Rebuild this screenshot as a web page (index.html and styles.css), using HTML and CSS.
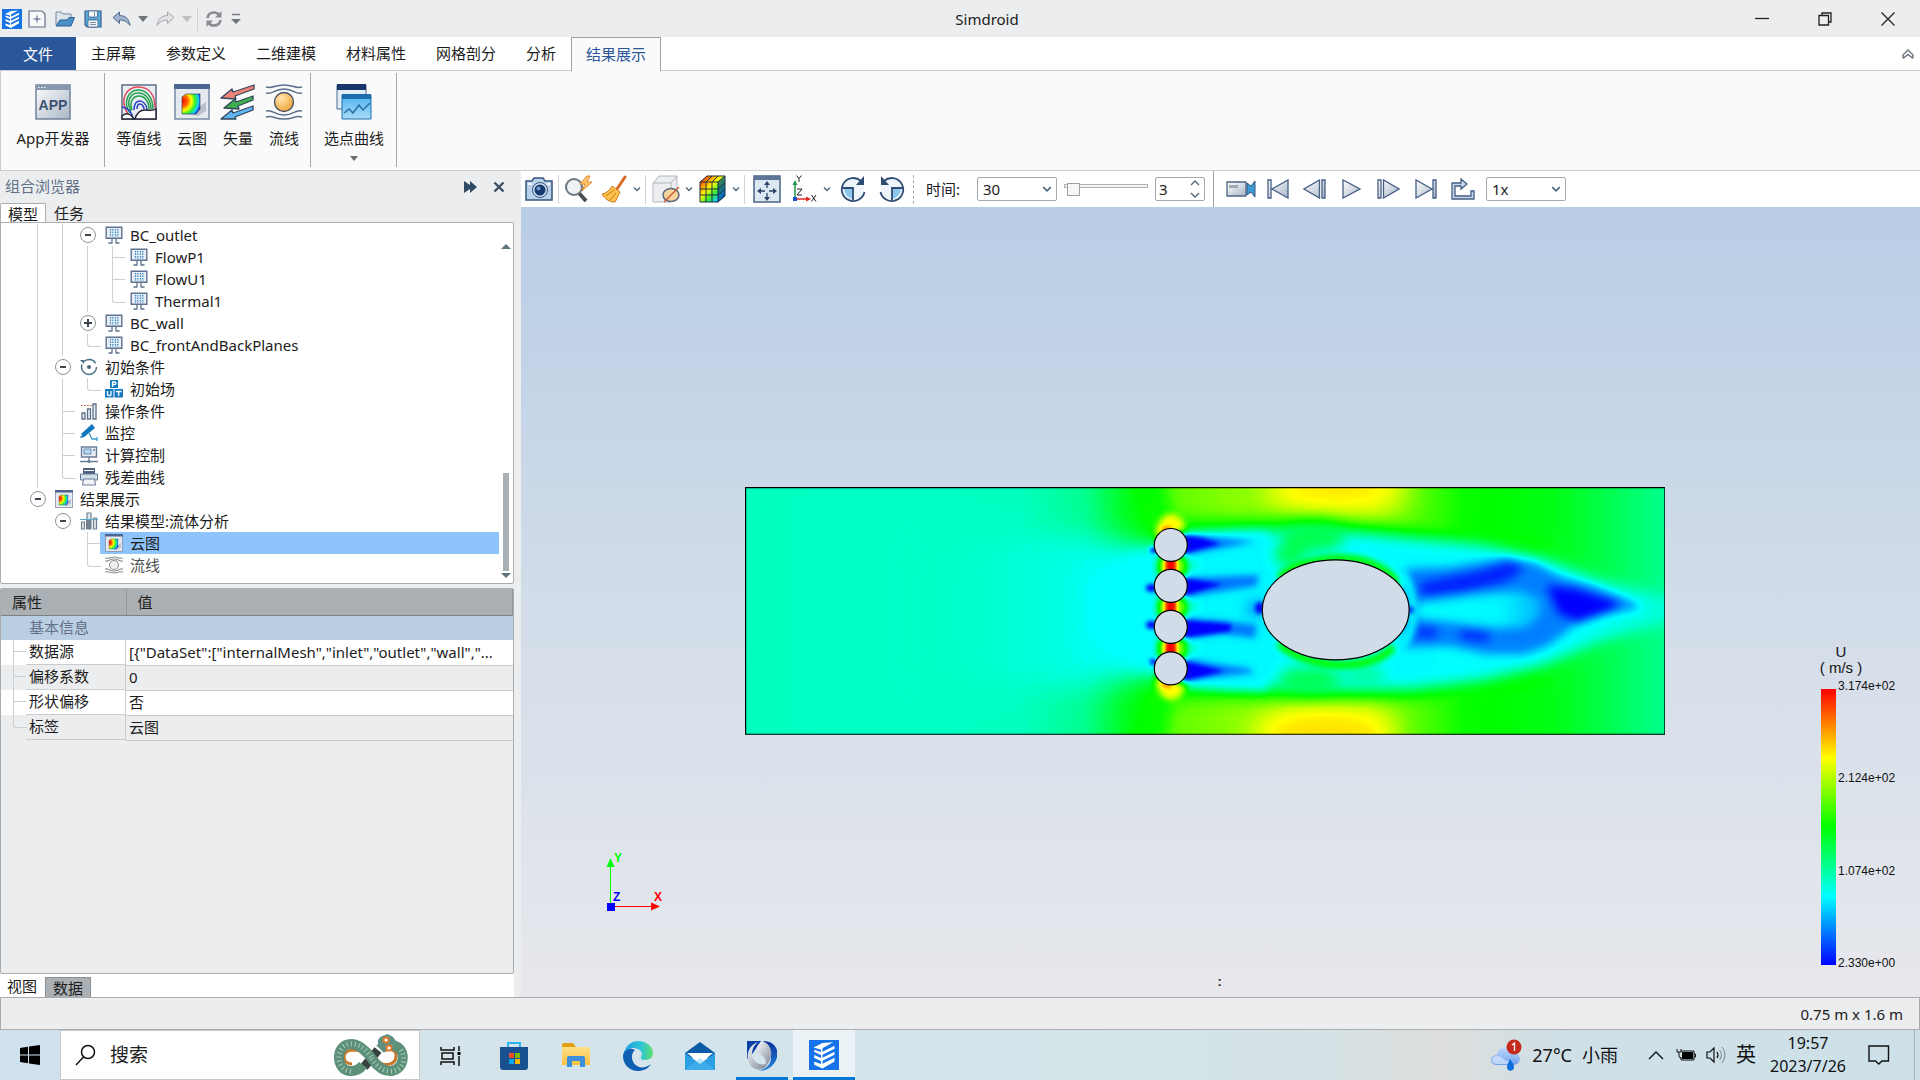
FILE: index.html
```html
<!DOCTYPE html>
<html lang="zh-CN">
<head>
<meta charset="utf-8">
<title>Simdroid</title>
<link rel="stylesheet" href="styles.css">
</head>
<body>
<svg class="defs" aria-hidden="true">
  <defs>
    <linearGradient id="steel" x1="0" y1="0" x2="1" y2="1"><stop offset="0" stop-color="#fff"/><stop offset="1" stop-color="#a9b6c6"/></linearGradient>
    <linearGradient id="sky" x1="0" y1="0" x2="0" y2="1"><stop offset="0" stop-color="#4bb4ee"/><stop offset="1" stop-color="#a9dcf7"/></linearGradient>
    <linearGradient id="heat" x1="0" y1="0" x2="1" y2="1"><stop offset="0" stop-color="#f00"/><stop offset=".25" stop-color="#f90"/><stop offset=".42" stop-color="#ff0"/><stop offset=".62" stop-color="#3e3"/><stop offset=".8" stop-color="#1cf"/><stop offset="1" stop-color="#22d"/></linearGradient>
    <radialGradient id="blob" gradientUnits="userSpaceOnUse" cx="8" cy="17" r="19"><stop offset="0" stop-color="#f00"/><stop offset=".3" stop-color="#f60"/><stop offset=".5" stop-color="#ff0"/><stop offset=".7" stop-color="#3e3"/><stop offset=".88" stop-color="#1cf"/><stop offset="1" stop-color="#22d"/></radialGradient>
    <radialGradient id="amber" cx=".35" cy=".3" r=".8"><stop offset="0" stop-color="#ffe6b0"/><stop offset="1" stop-color="#f0a030"/></radialGradient>
    <linearGradient id="folder" x1="0" y1="0" x2="0" y2="1"><stop offset="0" stop-color="#ffe08a"/><stop offset="1" stop-color="#fbc13c"/></linearGradient>
    <linearGradient id="edge1" x1="0" y1="0" x2="1" y2="0"><stop offset="0" stop-color="#1b9de2"/><stop offset=".6" stop-color="#2fc6d6"/><stop offset="1" stop-color="#5fe06a"/></linearGradient>
    <linearGradient id="cloud" x1="0" y1="0" x2="0" y2="1"><stop offset="0" stop-color="#c6dcfb"/><stop offset="1" stop-color="#6f9fee"/></linearGradient>
    <linearGradient id="silver" x1="0" y1="0" x2="1" y2="1"><stop offset="0" stop-color="#f7f8fa"/><stop offset="1" stop-color="#7d8797"/></linearGradient>
    <linearGradient id="royal" x1="0" y1="0" x2="0" y2="1"><stop offset="0" stop-color="#0b2f9c"/><stop offset="1" stop-color="#1f86dd"/></linearGradient>
    <symbol id="logo" viewBox="0 0 20 20"><path fill="#1673ea" d="M0 0h20v20H0z"/><path fill="#fff" d="M3 5l6-3 7-.5-7 4v2.300l8-4v2l-8 4v2l8-4v2l-8 4v2l8-4v2.500L9 19l-5.500-2.500v-2L8 16v-2l-4.500-2v-2L8 12v-2L3.500 8V6.500L8 8V6.500z"/></symbol>
    <symbol id="monitor" viewBox="0 0 18 18"><path fill="#e9eff5" stroke="#5f728f" stroke-width="1.400" d="M1.200 1.200h15.600v11H1.200z"/><path stroke="#2f86c8" stroke-width="1.200" stroke-dasharray="1.500 1" d="M5.500 3v8M7.800 3v8M10.500 3v8M12.800 3v8"/><path stroke="#5f728f" stroke-width="1.300" fill="none" d="M7 12.500V17M11 12.500V17M3.500 17h4M10.500 17h4"/></symbol>
    <symbol id="heatwin" viewBox="0 0 36 36"><path fill="#e4e8ef" stroke="#7a8aa4" stroke-width="1.500" d="M1 1h34v34H1z"/><path fill="#4d6690" d="M0 0h36v5H0z"/><path fill="#8d98a8" opacity=".5" d="M14 30 32 18v9l-8 5z"/><path fill="url(#blob)" stroke="#234" stroke-width=".6" d="M8 13l4-3h14v15l-4 5H8z"/></symbol>
    <symbol id="chev" viewBox="0 0 8 8"><path fill="none" stroke="#51677a" stroke-width="1.400" d="M1 2.500 4 5.500 7 2.500"/></symbol>
    <symbol id="caret" viewBox="0 0 10 6"><path fill="currentColor" d="M0 0h10L5 6z"/></symbol>
  </defs>
</svg>

<header class="titlebar">
  <div class="quick">
    <svg class="logo"><use href="#logo"/></svg>
    <button aria-label="新建"><svg width="18" height="18" viewBox="0 0 18 18"><path fill="#f7f9fb" stroke="#5d6f8a" stroke-width="1.200" d="M1 1h13l3 3v13H1z"/><path stroke="#4a5b78" d="M9 5.500v7M5.500 9h7"/></svg></button>
    <button aria-label="打开"><svg width="20" height="18" viewBox="0 0 20 18"><path fill="#dde3ea" stroke="#7586a0" d="M1 15V2h5l2 2h8v6"/><path fill="#4a90c8" stroke="#2a5f94" d="M1 16 5 10h7l2-2.500h5.500L16 16z"/></svg></button>
    <button aria-label="保存"><svg width="18" height="18" viewBox="0 0 18 18"><path fill="#5aa6d8" stroke="#3a628c" stroke-width="1.200" d="M1 1h16v16H3l-2-2z"/><path fill="#f4f6f8" stroke="#3a628c" stroke-width=".8" d="M4.500 1h9v6h-9zM4 10h10v7H4z"/><path stroke="#7b8ea8" d="M10.500 2v4M6 12.500h6M6 14.500h6"/></svg></button>
    <button aria-label="撤销"><svg width="19" height="16" viewBox="0 0 19 16"><path fill="#9fb3cc" stroke="#50688c" d="M1 6.500 7.500 1v3.500c6 0 9.500 3.500 10.500 10C15 10.500 12 9 7.500 9v3.500z"/></svg></button>
    <button class="drop" aria-label="撤销列表"><svg width="10" height="6" color="#707478"><use href="#caret"/></svg></button>
    <button aria-label="重做"><svg width="19" height="16" viewBox="0 0 19 16"><path fill="#e2e3e5" stroke="#a3a5a8" d="M18 6.500 11.500 1v3.500C5.500 4.500 2 8 1 14.500 4 10.500 7 9 11.500 9v3.500z"/></svg></button>
    <button class="drop" aria-label="重做列表"><svg width="10" height="6" color="#bcbec0"><use href="#caret"/></svg></button>
    <span class="tick"></span>
    <button aria-label="刷新"><svg width="18" height="18" viewBox="0 0 18 18"><path fill="none" stroke="#8a8c8f" stroke-width="2.600" d="M2.500 8C3 4.500 5.500 2.500 9 2.500c2.200 0 4 .9 5 2.300M15.500 10c-.5 3.500-3 5.500-6.500 5.500-2.200 0-4-.9-5-2.300"/><path fill="#8a8c8f" d="M16.500 1v6.500H10zM1.500 17v-6.500H8z"/></svg></button>
    <button class="drop" aria-label="自定义"><svg width="10" height="12" viewBox="0 0 10 12"><path stroke="#7b7d80" stroke-width="1.500" d="M1 1.500h8"/><path fill="#707478" d="M0 6h10l-5 5z"/></svg></button>
  </div>
  <h1 class="title">Simdroid</h1>
  <div class="winbtns">
    <button aria-label="最小化"><svg width="14" height="14"><path stroke="#222" stroke-width="1.300" d="M0 6.500h14"/></svg></button>
    <button aria-label="还原"><svg width="14" height="14"><path fill="none" stroke="#222" stroke-width="1.300" d="M1 3.500h9.500V13H1zM4 3V1h9v9h-2"/></svg></button>
    <button aria-label="关闭"><svg width="14" height="14"><path stroke="#222" stroke-width="1.300" d="M.5.500l13 13M13.500.500l-13 13"/></svg></button>
  </div>
</header>

<nav class="tabs">
  <button class="tab file">文件</button>
  <button class="tab">主屏幕</button>
  <button class="tab">参数定义</button>
  <button class="tab">二维建模</button>
  <button class="tab">材料属性</button>
  <button class="tab">网格剖分</button>
  <button class="tab">分析</button>
  <button class="tab active">结果展示</button>
  <button class="collapse" aria-label="折叠功能区"><svg width="12" height="10"><path fill="none" stroke="#6a7584" stroke-width="1.400" d="M1.500 9C0 7 1 5.500 3 4l3-3 3 3c2 1.500 3 3 1.500 5L6 5.500z"/></svg></button>
</nav>

<section class="ribbon">
  <div class="group">
    <button class="cmd wide"><svg width="36" height="36" viewBox="0 0 36 36"><path fill="url(#steel)" stroke="#71819a" stroke-width="1.500" d="M1 1h34v34H1z"/><path fill="#8797ad" d="M1 1h34v5H1z"/><path stroke="#fff" stroke-dasharray="1.500 1.500" d="M3 3.500h8"/><text class="apptext" x="18" y="26">APP</text></svg>App开发器</button>
  </div>
  <div class="group">
    <button class="cmd mid"><svg width="36" height="36" viewBox="0 0 36 36"><path fill="#e9edf3" stroke="#5c6c87" stroke-width="1.500" d="M1 1h34v34H1z"/><g fill="none" stroke-width="1.500"><path stroke="#e0455a" d="M7 30C-2 16 5 3 17 3s17 9 17 21"/><path stroke="#22a04a" d="M9 29C1 18 8 6 17 6s15 8 15 19M10 27C5 18 9 9 17 9s13 7 13 16M11 26c-3-8 1-14 7-14s10 6 10 13"/><path stroke="#2a3fc8" d="M13 26c0-7 3-9 6-9s7 4 7 9M16 25c0-4 1-5 3-5s4 3 4 5M1 23c7 1 10 5 11 12"/></g><path fill="#fff" stroke="#223" stroke-width="1.500" d="M14 35c2-7 6-9 10-9s8 1 11-1v10zM1 32c5-4 9-2 12 3H1z"/></svg>等值线</button>
    <button class="cmd"><svg width="36" height="36"><use href="#heatwin"/></svg>云图</button>
    <button class="cmd"><svg width="36" height="36" viewBox="0 0 36 36"><g stroke="#34465e" stroke-width="1.300" stroke-linejoin="round"><path fill="#ef8377" d="M1 14 12 5l1 3L34 1v4L15 12l1 3z"/><path fill="#3fae4e" d="M4 24l11-9 1 3 17-6v4l-15 6 1 3z"/><path fill="#5fb4f2" d="M1 35l11-9 1 3 20-7v4l-18 7 1 2z"/></g></svg>矢量</button>
    <button class="cmd"><svg width="36" height="36" viewBox="0 0 36 36"><g fill="none" stroke="#5b6e8c" stroke-width="1.500"><path d="M0 3c7 2 8-2 18-2s11 4 18 2M0 9c7 2 8-4 18-4s11 6 18 4M0 27c7-2 8 4 18 4s11-6 18-4M0 33c7-2 8 2 18 2s11-4 18-2"/></g><circle cx="18" cy="18" r="9.500" fill="url(#amber)" stroke="#4c5668" stroke-width="1.400"/></svg>流线</button>
  </div>
  <div class="group">
    <button class="cmd plot"><svg width="36" height="36" viewBox="0 0 36 36"><path fill="#e2eef8" stroke="#4c6d92" d="M1 1h29v24H1z"/><path fill="#17356b" d="M1 0h29v6H1z"/><path fill="url(#sky)" stroke="#1d6fae" d="M6 11h29v24H6z"/><path fill="#1c6cae" d="M6 10h29v5H6z"/><path fill="none" stroke="#2b6fa6" stroke-width="1.500" d="M8 29l5-4 4 4 6-8 4 5 7-7"/></svg>选点曲线<svg class="more" width="8" height="5"><use href="#caret"/></svg></button>
  </div>
</section>

<main class="work">
  <aside class="side">
    <div class="sidehead"><span>组合浏览器</span>
      <button aria-label="自动隐藏"><svg width="14" height="12"><path fill="#2f4a63" d="M1 0l6 4V0l7 6-7 6V8l-6 4z"/></svg></button>
      <button aria-label="关闭面板"><svg width="12" height="12"><path stroke="#3b4f63" stroke-width="2.400" d="M1.500 1.500l9 9M10.500 1.500l-9 9"/></svg></button>
    </div>
    <div class="sidetabs"><button class="on">模型</button><button>任务</button></div>
    <div class="tree">
      <ul class="rows">
        <li><i class="v"></i><i class="v"></i><i class="x"></i><svg class="ic"><use href="#monitor"/></svg>BC_outlet</li>
        <li><i class="v"></i><i class="v"></i><i class="v"></i><i class="t"></i><svg class="ic"><use href="#monitor"/></svg>FlowP1</li>
        <li><i class="v"></i><i class="v"></i><i class="v"></i><i class="t"></i><svg class="ic"><use href="#monitor"/></svg>FlowU1</li>
        <li><i class="v"></i><i class="v"></i><i class="v"></i><i class="l"></i><svg class="ic"><use href="#monitor"/></svg>Thermal1</li>
        <li><i class="v"></i><i class="v"></i><i class="x p"></i><svg class="ic"><use href="#monitor"/></svg>BC_wall</li>
        <li><i class="v"></i><i class="v"></i><i class="l"></i><svg class="ic"><use href="#monitor"/></svg>BC_frontAndBackPlanes</li>
        <li><i class="v"></i><i class="x"></i><svg class="ic" viewBox="0 0 18 18"><circle cx="9" cy="9" r="7.500" fill="none" stroke="#3f6f80" stroke-width="1.400" stroke-dasharray="26 3 14 4"/><circle cx="9" cy="9" r="2" fill="#4a6a7c"/><path fill="#3f6f80" d="M0 2h4v4z"/></svg>初始条件</li>
        <li><i class="v"></i><i class="v"></i><i class="l"></i><svg class="ic" viewBox="0 0 18 18"><path fill="#1679c0" d="M5 0h8v8H5zM0 9h8.500v8.500H0zM9.500 9H18v8.500H9.500z"/><path fill="none" stroke="#fff" stroke-width="1.300" d="M7.500 7V2h2c2 0 2 2.500 0 2.500h-2M2.500 11v3.500c0 1.500 3.500 1.500 3.500 0V11M11 11.500h5.500M13.700 11.500V16"/></svg>初始场</li>
        <li><i class="v"></i><i class="t"></i><svg class="ic" viewBox="0 0 18 18"><path fill="#e6edf4" stroke="#5f7088" stroke-width="1.300" d="M2 11h3v6H2zM7.500 7h3v10h-3zM13 2h3v15h-3z"/><path stroke="#c8785a" stroke-dasharray="2 1" d="M1 3.500h11"/></svg>操作条件</li>
        <li><i class="v"></i><i class="t"></i><svg class="ic" viewBox="0 0 18 18"><path fill="#1176bd" d="M1 10 12 0l3 4L4 13zM0 13l4-3 2 2-5 2z"/><path fill="none" stroke="#3f9ad2" stroke-width="1.300" d="M9 9l3 6h5M17 13v4"/></svg>监控</li>
        <li><i class="v"></i><i class="t"></i><svg class="ic" viewBox="0 0 18 18"><path fill="#e8edf3" stroke="#6b7c96" stroke-width="1.400" d="M1.500 1h15v10h-15z"/><path fill="#b8d6ee" stroke="#5f8fb4" d="M4 3h7v5H4z"/><path stroke="#6b7c96" stroke-width="1.300" d="M0 15.500h18M9 11v4M13 4h2"/><circle cx="9" cy="15.500" r="1.600" fill="#6b7c96"/></svg>计算控制</li>
        <li><i class="v"></i><i class="l"></i><svg class="ic" viewBox="0 0 18 18"><path fill="#4e617e" d="M3 0h12v6H3z"/><path fill="#d5dfe8" stroke="#667a98" d="M.5 6h17v6H.5z"/><path fill="#f1f4f7" stroke="#667a98" d="M3.500 11h11l1 6h-13z"/><path stroke="#fff" d="M4 2.500h10"/></svg>残差曲线</li>
        <li><i class="x"></i><svg class="ic"><use href="#heatwin"/></svg>结果展示</li>
        <li><i></i><i class="x"></i><svg class="ic" viewBox="0 0 18 18"><path fill="#dfe6ec" stroke="#72818f" stroke-width="1.200" d="M1.500 10h3v7h-3zM7 1h4v16H7zM13.500 6h3v11h-3z"/><path fill="#71808c" d="M6 8h5v9H6z"/><path stroke="#58a8cc" d="M0 7.500h18"/></svg>结果模型:流体分析</li>
        <li><i></i><i></i><i class="t"></i><span class="sel"><svg class="ic"><use href="#heatwin"/></svg>云图</span></li>
        <li class="dim"><i></i><i></i><i class="l"></i><svg class="ic" viewBox="0 0 18 18"><g fill="none" stroke="#8f9294" stroke-width="1.100"><path d="M0 2c4 1 5-1 9-1s5 2 9 1M0 5c4 1 4-2 9-2s5 3 9 2M0 13c4-1 4 2 9 2s5-3 9-2M0 16c4-1 5 1 9 1s5-2 9-1"/><circle cx="9" cy="9" r="4.500" fill="#eee"/></g></svg>流线</li>
      </ul>
      <div class="scroll"><svg width="10" height="6"><path fill="#5f757e" d="M0 6h10L5 1z"/></svg><span></span><svg width="10" height="6"><path fill="#5f757e" d="M0 0h10L5 5z"/></svg></div>
    </div>
    <div class="props">
      <table>
        <thead><tr><th>属性</th><th>值</th></tr></thead>
        <tbody>
          <tr class="cat"><td colspan="2">基本信息</td></tr>
          <tr><td><i class="t"></i><span>数据源</span></td><td>[{"DataSet":["internalMesh","inlet","outlet","wall","...</td></tr>
          <tr><td><i class="t"></i><span>偏移系数</span></td><td>0</td></tr>
          <tr><td><i class="t"></i><span>形状偏移</span></td><td>否</td></tr>
          <tr><td><i class="l"></i><span>标签</span></td><td>云图</td></tr>
        </tbody>
      </table>
    </div>
    <div class="foottabs"><button>视图</button><button class="on">数据</button></div>
  </aside>

  <section class="view">
    <div class="toolbar">
      <button class="tool" aria-label="截图"><svg width="28" height="24" viewBox="0 0 28 24"><path fill="#b9d2ea" stroke="#35547e" stroke-width="1.500" d="M1 4h6l2-3h9l2 3h7v19H1z"/><path fill="#fff" d="M3 6h4v2H3zM22 6h3v2h-3z"/><circle cx="15" cy="13" r="7.500" fill="#cfe0f0" stroke="#35547e"/><circle cx="15" cy="13" r="5.500" fill="#173a70"/><circle cx="13.500" cy="11.500" r="2" fill="#6f9ccc"/></svg></button>
      <span class="bar"></span>
      <button class="tool" aria-label="缩放"><svg width="30" height="28" viewBox="0 0 30 28"><path stroke="#4b4f55" stroke-width="4" d="M15 18l7 8"/><circle cx="10" cy="12" r="8" fill="#eef2f5" stroke="#6f767e" stroke-width="2"/><path fill="#ffc46b" stroke="#e08a2c" d="M23 1 16 9h5l-3 7 10-9h-5l3-6z"/></svg></button>
      <button class="tool" aria-label="清除"><svg width="26" height="28" viewBox="0 0 26 28"><path stroke="#d96b2a" stroke-width="3" stroke-linecap="round" d="M24 2l-8 12"/><path fill="#ffc24a" stroke="#c87a22" d="M1 19c5-1 8-4 10-8l8 6c-2 4-3 7-5 10C8 27 4 24 1 19z"/><path stroke="#c87a22" fill="none" d="M5 21l8-6M9 25l6-7"/></svg></button>
      <button class="drop" aria-label="清除选项"><svg width="8" height="8"><use href="#chev"/></svg></button>
      <span class="bar"></span>
      <button class="tool" aria-label="切面"><svg width="28" height="28" viewBox="0 0 28 28"><path fill="#eceef1" stroke="#b1b6bd" d="M1 8 7 1h18v19l-6 7H1z"/><path fill="none" stroke="#b1b6bd" d="M1 8h18v19M19 8l6-7"/><ellipse cx="19" cy="20" rx="8" ry="6.500" fill="#f4d49a" stroke="#5c6b80" stroke-width="1.500"/><path stroke="#d0502e" stroke-width="1.300" d="M12 27 27 12"/></svg></button>
      <button class="drop" aria-label="切面选项"><svg width="8" height="8"><use href="#chev"/></svg></button>
      <button class="tool" aria-label="网格云图"><svg width="27" height="28" viewBox="0 0 27 28"><path fill="url(#heat)" d="M1 7 8 1h18v20l-7 6H1z"/><path fill="#0a3f8c" opacity=".65" d="M19 7l7-6v20l-7 6z"/><path fill="none" stroke="#1d2f3f" d="M1 7 8 1h18v20l-7 6H1zM1 7h18v20M19 7l7-6M7 7v20M13 7v20M1 14h18l7-6M1 20h18l7-6M7 7l6-6M13 7l6-6"/></svg></button>
      <button class="drop" aria-label="网格云图选项"><svg width="8" height="8"><use href="#chev"/></svg></button>
      <span class="bar"></span>
      <button class="tool big" aria-label="适应窗口"><svg width="28" height="28" viewBox="0 0 28 28"><path fill="#dce9f3" stroke="#4a6285" stroke-width="1.500" d="M1 1h26v26H1z"/><path fill="#5d7698" d="M1 1h26v4H1z"/><path stroke="#2c4468" stroke-width="1.300" d="M14 9v4M14 18v5M7 16h5M16 16h5"/><path fill="#2c4468" d="M14 6l3 4h-6zM14 26l3-4h-6zM4 16l4-3v6zM24 16l-4-3v6z"/></svg></button>
      <button class="tool" aria-label="视角"><svg width="26" height="28" viewBox="0 0 26 28"><path stroke="#23944a" stroke-width="1.500" d="M4 24V9"/><path fill="#23944a" d="M1.500 10h5L4 5z"/><path stroke="#e02828" stroke-width="1.500" d="M4 24h12"/><path fill="#e02828" d="M15 21.500v5l5-2.500z"/><path fill="#1e50c8" d="M2 22h4v4H2z"/><path fill="none" stroke="#222" d="M5.500.500l2.500 3 2.500-3M8 3.500V7M6 14h5l-5 6h5M20.500 20l4.500 6.500M25 20l-4.500 6.500"/></svg></button>
      <button class="drop" aria-label="视角选项"><svg width="8" height="8"><use href="#chev"/></svg></button>
      <button class="tool big" aria-label="顺时针旋转"><svg width="26" height="28" viewBox="0 0 26 28"><circle cx="13" cy="14" r="11" fill="#eef5fa"/><path fill="#8cc8ee" d="M13 13v11a11 11 0 0 1-9-11z"/><path fill="none" stroke="#2e4a72" stroke-width="1.800" d="M21 6A11.500 11.500 0 1 0 24.500 17M2 13h11v12"/><path fill="#2e4a72" d="M24 1v9h-8z"/></svg></button>
      <button class="tool big" aria-label="逆时针旋转"><svg width="26" height="28" viewBox="0 0 26 28"><circle cx="13" cy="14" r="11" fill="#eef5fa"/><path fill="#8cc8ee" d="M13 13v11a11 11 0 0 0 9-11z"/><path fill="none" stroke="#2e4a72" stroke-width="1.800" d="M5 6A11.500 11.500 0 1 1 1.500 17M24 13H13v12"/><path fill="#2e4a72" d="M2 1v9h8z"/></svg></button>
      <span class="bar dots"></span>
      <label class="tlabel" for="time">时间:</label>
      <span class="select"><select id="time"><option>30</option></select><svg width="10" height="10"><use href="#chev"/></svg></span>
      <input class="slider" type="range" min="0" max="30" value="1" aria-label="时间帧">
      <span class="spin"><input type="number" value="3" aria-label="步数"><svg width="10" height="20"><path fill="none" stroke="#51677a" stroke-width="1.400" d="M1 6l4-4 4 4M1 14l4 4 4-4"/></svg></span>
      <span class="bar solid"></span>
      <button class="play" aria-label="录制"><svg width="30" height="18" viewBox="0 0 30 18"><path fill="url(#steel)" stroke="#4f6485" stroke-width="1.300" d="M1 2h19v14H1z"/><path fill="#a3a9b1" d="M3 5h9v3H3z"/><path fill="#3d9ad0" stroke="#35547e" d="M21 3l4 3 4-5v16l-4-5-4 3z"/></svg></button>
      <button class="play" aria-label="第一帧"><svg width="22" height="20" viewBox="0 0 22 20"><path fill="url(#steel)" stroke="#465e84" stroke-width="1.300" d="M1 1h3v18H1zM21 1v18L5 10z"/></svg></button>
      <button class="play" aria-label="上一帧"><svg width="23" height="20" viewBox="0 0 23 20"><path fill="url(#steel)" stroke="#465e84" stroke-width="1.300" d="M19 1h3v18h-3zM16.500 1v18L1 10z"/></svg></button>
      <button class="play" aria-label="播放"><svg width="19" height="20" viewBox="0 0 19 20"><path fill="url(#steel)" stroke="#465e84" stroke-width="1.300" d="M1 1v18l17-9z"/></svg></button>
      <button class="play" aria-label="下一帧"><svg width="23" height="20" viewBox="0 0 23 20"><path fill="url(#steel)" stroke="#465e84" stroke-width="1.300" d="M1 1h3v18H1zM6.500 1v18L22 10z"/></svg></button>
      <button class="play" aria-label="最后一帧"><svg width="22" height="20" viewBox="0 0 22 20"><path fill="url(#steel)" stroke="#465e84" stroke-width="1.300" d="M18 1h3v18h-3zM1 1v18l16-9z"/></svg></button>
      <button class="play" aria-label="循环"><svg width="24" height="22" viewBox="0 0 24 22"><path fill="#c6d6e6" stroke="#465e84" stroke-width="1.300" d="M1 21V5h9V1l6 5-6 5V8H4v10h16v-5h3v8z"/></svg></button>
      <span class="select speed"><select aria-label="播放速度"><option>1x</option></select><svg width="10" height="10"><use href="#chev"/></svg></span>
    </div>
    <div class="scene">
      <svg class="field" viewBox="0 0 921 248">
        <defs>
          <!-- grey level = velocity magnitude; the table maps it onto the blue-cyan-green-yellow-red scale -->
          <filter id="rainbow" x="0" y="0" width="1" height="1" color-interpolation-filters="sRGB">
            <feComponentTransfer>
              <feFuncR type="table" tableValues="0 0 0 1 1"/>
              <feFuncG type="table" tableValues="0 1 1 1 0"/>
              <feFuncB type="table" tableValues="1 1 0 0 0"/>
            </feComponentTransfer>
          </filter>
          <filter id="b2" x="-1" y="-1" width="3" height="3" color-interpolation-filters="sRGB"><feGaussianBlur stdDeviation="2"/></filter>
          <filter id="b3" x="-1" y="-1" width="3" height="3" color-interpolation-filters="sRGB"><feGaussianBlur stdDeviation="3"/></filter>
          <filter id="b5" x="-1" y="-1" width="3" height="3" color-interpolation-filters="sRGB"><feGaussianBlur stdDeviation="5"/></filter>
          <filter id="b8" x="-1" y="-1" width="3" height="3" color-interpolation-filters="sRGB"><feGaussianBlur stdDeviation="7"/></filter>
          <filter id="b16" x="-1" y="-1" width="3" height="3" color-interpolation-filters="sRGB"><feGaussianBlur stdDeviation="14"/></filter>
          <linearGradient id="stream" gradientUnits="userSpaceOnUse" x1="0" y1="0" x2="921" y2="0">
            <stop offset="0" stop-color="#505050"/><stop offset=".15" stop-color="#4e4e4e"/><stop offset=".3" stop-color="#505050"/><stop offset=".37" stop-color="#5c5c5c"/><stop offset=".41" stop-color="#767676"/><stop offset=".44" stop-color="#848484"/><stop offset=".47" stop-color="#989898"/><stop offset=".53" stop-color="#a2a2a2"/><stop offset=".68" stop-color="#a8a8a8"/><stop offset=".73" stop-color="#969696"/><stop offset=".78" stop-color="#828282"/><stop offset=".88" stop-color="#7a7a7a"/><stop offset="1" stop-color="#5c5c5c"/>
          </linearGradient>
          <linearGradient id="fan" gradientUnits="userSpaceOnUse" x1="200" y1="0" x2="400" y2="0"><stop offset="0" stop-color="#4e4e4e"/><stop offset=".45" stop-color="#494949"/><stop offset="1" stop-color="#3f3f3f"/></linearGradient>
          <linearGradient id="wake" gradientUnits="userSpaceOnUse" x1="430" y1="0" x2="921" y2="0"><stop offset="0" stop-color="#3e3e3e"/><stop offset=".8" stop-color="#404040"/><stop offset="1" stop-color="#4a4a4a"/></linearGradient>
          <linearGradient id="core" gradientUnits="userSpaceOnUse" x1="670" y1="0" x2="810" y2="0"><stop offset="0" stop-color="#404040"/><stop offset=".6" stop-color="#3e3e3e"/><stop offset="1" stop-color="#282828"/></linearGradient>
          <clipPath id="domain"><path d="M0 0h921v248H0z"/></clipPath>
        </defs>
        <g filter="url(#rainbow)"><g clip-path="url(#domain)">
          <path fill="url(#stream)" d="M0 0h921v248H0z"/>
          <g filter="url(#b16)">
            <ellipse cx="592" cy="2" rx="72" ry="24" fill="#c6c6c6"/><ellipse cx="580" cy="248" rx="72" ry="34" fill="#c6c6c6"/>
            <path fill="url(#fan)" d="M180 60l130-12 60 6 70 14v112l-70 14-60 6-130-12z"/>
          </g>
          <path filter="url(#b8)" fill="#808080" d="M380-10l34 0 16 50-8 14zM380 258l34 0 16-50-8-14z"/>
          <path filter="url(#b8)" fill="#404040" d="M340 96l50-32 50-6v130l-50-6-50-32z"/>
          <g filter="url(#b8)">
            <path fill="#828282" d="M430 30h150l80 8 80 8 60 10 0 20-370-10zM430 214h150l80 0 80-6 60-14v-24l-370 20z"/>
            <path fill="url(#wake)" d="M436 48l60-4h60l60 2 50 5 70 6 60 13 60 24 80 18v20l-80 22-60 26-60 14-70 8-60 0-60-2-60 0-60-4z"/>
          </g>
          <path filter="url(#b5)" fill="#3e3e3e" d="M442 47l80-2v158l-80-4z"/>
          <g filter="url(#b8)" fill="#6c6c6c"><ellipse cx="568" cy="51" rx="32" ry="14"/><ellipse cx="545" cy="68" rx="16" ry="12"/><ellipse cx="565" cy="192" rx="32" ry="12"/><ellipse cx="620" cy="188" rx="22" ry="7" fill="#606060"/></g>
          <g filter="url(#b3)" fill="none" stroke="#8c8c8c" stroke-width="7">
            <path d="M534 91C555 71 627 57 654 98M534 156c22 24 90 32 115 4"/>
          </g>
          <g filter="url(#b5)">
            <path fill="#202020" d="M662 82l44-2 54-9 30 5 26 14 34 9 36 15 12 7-38 7-28 9-28 21-24 9-38 0-36-8-46 1z"/>
            <path fill="#080808" d="M674 96l30-6 34-7 28-9 14 8-18 12-40 10-44 5z"/>
            <path fill="#000" d="M802 98l30 4 44 14-10 7-32 12-20-8z"/>
            <path fill="none" stroke="#0c0c0c" stroke-width="11" d="M672 146l20-1M716 147l28 3"/>
            <path fill="#303030" d="M500 115l18-6v24l-18-4z"/>
          </g>
          <path filter="url(#b5)" fill="url(#core)" d="M672 116l60-8 44-4 20 8 0 16-14 12-30 1-82-10z"/>
          <path filter="url(#b3)" fill="none" stroke="#424242" stroke-width="7" d="M658 88c14 18 14 54 0 70"/>
          <g filter="url(#b3)" fill="#1e1e1e">
            <path d="M440 49l26 1 44 5-44 8-26 4zM440 91l74-3-2 11-72 11zM440 132l30 1 42 5-2 13-32-4-38 4zM440 172l66 10 2 4-68 7z"/>
          </g>
          <g filter="url(#b2)" fill="#000">
            <path d="M438 48l20 3 18 6-16 4-22 6zM438 91l40 6-40 12zM438 133l48 4 0 7-48 7zM438 174l18 4 24 6-24 6-18 4z"/>
            <ellipse cx="409" cy="63" rx="4" ry="3"/><ellipse cx="407" cy="101" rx="6" ry="4"/><ellipse cx="407" cy="138" rx="6" ry="4"/><ellipse cx="409" cy="175" rx="4" ry="3"/><ellipse cx="515" cy="121" rx="5" ry="6"/><ellipse cx="666" cy="123" rx="3" ry="3"/>
          </g>
          <g filter="url(#b5)" fill="#7a7a7a"><path d="M426 74l30 4-30 7zM426 115l30 4-30 7zM426 157l30 4-30 7z"/></g>
          <g filter="url(#b3)" fill="#a0a0a0"><path d="M413 71h28v17h-28zM413 112h28v17h-28zM413 153h28v17h-28z"/></g>
          <g filter="url(#b2)" fill="#fff"><path d="M420 70h12v18h-12zM420 111h12v18h-12zM420 152h12v18h-12z"/></g>
          <g filter="url(#b3)" fill="#c0c0c0"><path d="M410 50c2-14 8-23 16-23s12 8 16 13l-14 6zM410 190c2 14 8 23 16 23s12-8 16-13l-14-6z"/></g>
          <g filter="url(#b2)" fill="#e8e8e8"><ellipse cx="422" cy="42" rx="6" ry="2"/><ellipse cx="422" cy="198" rx="6" ry="2"/></g>
        </g></g>
        <g fill="#d2dce9" stroke="#000" stroke-width="1.200">
          <circle cx="426" cy="58" r="16.500"/><circle cx="426" cy="99" r="16.500"/><circle cx="426" cy="140" r="16.500"/><circle cx="426" cy="181.500" r="16.500"/>
          <ellipse cx="591" cy="123" rx="73.500" ry="50"/>
          <path fill="none" d="M.6.600h919.800v246.800H.6z"/>
        </g>
      </svg>
      <svg class="axes" width="60" height="62" viewBox="0 0 60 62"><path stroke="#0f0" d="M5.500 54V14"/><path fill="#0f0" d="M1.500 15h8l-4-9z"/><path stroke="#f00" d="M6 54.500h42"/><path fill="#f00" d="M46 50.500v8l9-4z"/><path fill="#00f" d="M2 51h8v8H2z"/><text x="9" y="10" fill="#0f0">Y</text><text x="8" y="49" fill="#00f">Z</text><text x="49" y="49" fill="#f00">X</text></svg>
      <div class="legend">
        <div class="lt">U<br>( m/s )</div>
        <div class="lb"><span class="ramp"></span><div class="ticks"><span>3.174e+02</span><span>2.124e+02</span><span>1.074e+02</span><span>2.330e+00</span></div></div>
      </div>
      <span class="mark">:</span>
    </div>
  </section>
</main>

<div class="status">0.75 m x 1.6 m</div>

<footer class="taskbar">
  <button class="start" aria-label="开始"><svg width="20" height="20"><path d="M0 3l8-1.200V9.500H0zM9 1.600 20 0v9.500H9zM0 10.500h8v7.700L0 17zM9 10.500h11V20L9 18.400z"/></svg></button>
  <label class="search"><svg width="22" height="22"><circle cx="13" cy="8" r="6.500" fill="none" stroke="#111" stroke-width="1.500"/><path stroke="#111" stroke-width="1.500" d="M8.500 13 1 21"/></svg><input type="text" placeholder="搜索"><svg width="76" height="42" viewBox="0 0 76 42"><path fill="none" stroke="#c9772a" stroke-width="3" d="M36 23C30 16 24 16 19 16 8 17 9 30 19 30M46 28c4 4 16 4 17-5s-8-8-12-6"/><path fill="none" stroke="#35403f" stroke-width="9" d="M31 33l14-17"/><path fill="none" stroke="#5c9079" stroke-width="10" d="M40 26C30 13 24 10 18 10 2 10 2 37 18 37c5 0 9-2 12-6M47 15c3-3 6-4 10-4 18 0 16 26 0 26-8 0-13-5-18-12"/><path fill="none" stroke="#a9cdb8" stroke-width="5" stroke-dasharray="1 3" d="M38 23C30 12 24 10 18 10 2 10 2 37 18 37M68 16c6 9 2 21-11 21-8 0-13-5-19-13"/><path fill="#5f9180" d="M45 6c3-5 6-4 9-6 7 2 10 7 9 12-3 6-8 6-12 3-4-1-7-4-6-9z"/><circle cx="53" cy="6" r="3.500" fill="#e07a2e"/><circle cx="56" cy="14" r="3.500" fill="#e07a2e"/><circle cx="53" cy="6" r="1.500" fill="#fff"/><circle cx="56" cy="14" r="1.500" fill="#fff"/></svg></label>
  <button class="app first" aria-label="任务视图"><svg width="22" height="20"><path fill="none" stroke="#111" stroke-width="1.500" d="M1 1v3h13V1M1 19v-3h13v3M2 7h11v6H2zM19 0v5M19 10v10"/><path d="M17.500 6h3v3h-3z"/></svg></button>
  <button class="app" aria-label="应用商店"><svg width="30" height="30" viewBox="0 0 30 30"><path fill="none" stroke="#28b5f0" stroke-width="2" d="M9 7V2h12v5"/><path fill="#19508f" d="M1 6h28v20q0 3-3 3H4q-3 0-3-3z"/><path fill="#f25022" d="M10 12h5v5h-5z"/><path fill="#7fba00" d="M16 12h5v5h-5z"/><path fill="#00a4ef" d="M10 18h5v5h-5z"/><path fill="#ffb900" d="M16 18h5v5h-5z"/></svg></button>
  <button class="app" aria-label="文件资源管理器"><svg width="28" height="26" viewBox="0 0 28 26"><path fill="#e0a010" d="M0 2q0-2 2-2h9l3 4H0z"/><path fill="url(#folder)" d="M0 4h26q2 0 2 2v16H0z"/><path fill="#3b8ede" d="M5 24V15q0-2 2-2h14q2 0 2 2v9h-5v-6h-8v6z"/></svg></button>
  <button class="app" aria-label="Edge"><svg width="30" height="30" viewBox="0 0 30 30"><path fill="#0f5fb4" d="M0 15c1-8 7-9 12-6-5 4-4 14 4 17 4 1 8 0 12-3-3 5-8 7-13 7C6 30 0 23 0 15z"/><path fill="url(#edge1)" d="M1 12C3 4 9 0 15 0c9 0 15 6 15 12 0 5-4 7-8 7-3 0-5-1-4-3 3-5-2-9-8-9-4 0-7 2-9 5z"/></svg></button>
  <button class="app" aria-label="邮件"><svg width="30" height="28" viewBox="0 0 30 28"><path fill="#0b5aa6" d="M0 11 15 0l15 11v5H0z"/><path fill="#fff" d="M2 11h26l-13 11z"/><path fill="#2d9fe4" d="M0 11l15 11L30 11v17H0z"/><path fill="#55c0f2" d="M0 28l15-12 15 12z" opacity=".4"/></svg></button>
  <button class="app open" aria-label="仿真平台"><svg width="30" height="30" viewBox="0 0 30 30"><path fill="#0b3fa8" d="M0 0h14L6 12 0 18z"/><path fill="url(#silver)" d="M11 1C-1 5-2 20 5 26c5 4 13 4 15-3-8 2-15-3-15-10 0-5 2-9 6-12z"/><path fill="url(#royal)" d="M16 0c13 0 17 11 13 19-3 7-10 11-17 11 8-3 12-7 12-13 0-7-3-13-8-17z"/><path fill="url(#silver)" d="M10 6c3-6 9-6 12-1 4 6 3 15-4 21 2-7 0-9-4-12-3-2-5-5-4-8z"/></svg></button>
  <button class="app current" aria-label="Simdroid"><svg width="30" height="30"><use href="#logo"/></svg></button>
  <div class="tray">
    <button class="weather"><svg width="31" height="32" viewBox="0 0 31 32"><path fill="url(#cloud)" d="M6 26c-8 0-8-10 0-10C7 6 20 5 21 13c9-1 11 12 2 13z"/><path fill="#dbe8fd" opacity=".7" d="M6 25c-7 0-6-8 0-8 6 0 6 4 10 5s7 3 4 3z"/><path fill="#0f6fe0" d="M19 20c3 4 4 6 4 8 0 5-7 5-7 0 0-2 1-4 3-8z"/><circle cx="23" cy="8" r="7.500" fill="#c42b1c"/><path fill="none" stroke="#fff" stroke-width="1.300" d="M21 6l2.500-2v8"/></svg><span>27°C</span><span>小雨</span></button>
    <button class="sys" aria-label="显示隐藏的图标"><svg width="16" height="10"><path fill="none" stroke="#111" stroke-width="1.400" d="M1 9l7-7 7 7"/></svg></button>
    <button class="sys" aria-label="电源"><svg width="20" height="14"><path fill="none" stroke="#111" d="M5 3h13v9H5V9M18 6h1.500v3H18M1 1v3h4V1M3 4v4q0 2 2 2"/><path d="M6 4h11v7H6z"/></svg></button>
    <button class="sys" aria-label="音量"><svg width="20" height="18"><path fill="none" stroke="#111" stroke-width="1.200" d="M1 6h3l4-4v14l-4-4H1zM11 6q2 3 0 6"/><path fill="none" stroke="#8c979c" stroke-width="1.200" d="M13.500 4q4 5 0 10M16 1q6 8 0 16"/></svg></button>
    <button class="ime">英</button>
    <div class="clock"><time>19:57</time><time>2023/7/26</time></div>
    <button class="note" aria-label="通知"><svg width="22" height="20"><path fill="none" stroke="#111" stroke-width="1.400" d="M1 1h19.500v15H14l-3.200 3L7.500 16H1z"/></svg></button>
    <span class="peek"></span>
  </div>
</footer>
</body>
</html>
```
FILE: styles.css
```css
* { box-sizing: border-box; }
html, body { height: 100%; }
body {
  margin: 0;
  display: flex;
  flex-direction: column;
  background: #ecedef;
  color: #1c1c1c;
  font: 15px/20px "Noto Sans", "Noto Sans CJK SC", sans-serif;
  overflow: hidden;
}
button, input, select { font: inherit; color: inherit; margin: 0; }
button { background: none; border: 0; padding: 0; }
svg { display: block; flex: none; }
ul { list-style: none; margin: 0; padding: 0; }
.defs { position: absolute; width: 0; height: 0; }

/* title bar */
.titlebar { flex: none; height: 37px; display: flex; align-items: center; }
.quick { display: flex; align-items: center; height: 37px; }
.quick button { width: 28px; display: grid; place-items: center; }
.quick .drop { width: 16px; }
.logo { width: 20px; height: 20px; margin: 0 1px 0 2px; }
.tick { width: 1px; height: 24px; background: #d0d2d4; margin: 0 2px; }
.title { flex: 1; margin: 0; text-align: center; font-size: 15px; font-weight: 400; }
.winbtns { display: flex; padding-right: 1px; }
.winbtns button { width: 63px; height: 36px; display: grid; place-items: center; }

/* ribbon */
.tabs { flex: none; height: 34px; display: flex; background: #fff; border-bottom: 1px solid #cbcccd; }
.tab { height: 32px; padding: 0 15px; }
.file { height: 33px; background: #2b579a; color: #fff; padding: 0 23px; }
.active { height: 34px; padding: 0 14px 2px; color: #2b579a; background: #fafafa; border: 1px solid #a3a3a3; border-bottom: 0; }
.collapse { margin-left: auto; padding: 0 6px; }
.ribbon { flex: none; height: 100px; display: flex; padding: 2px 0 3px; background: #fafafa; border-left: 1px solid #cbcccd; border-bottom: 1px solid #cbcccd; }
.group { display: flex; padding: 0 3px 0 4px; border-right: 1px solid #a8a8a8; }
.cmd { width: 46px; display: flex; flex-direction: column; align-items: center; padding-top: 11px; gap: 8px; white-space: nowrap; }
.cmd.mid { width: 60px; }
.cmd.wide { width: 96px; }
.cmd.plot { width: 78px; }
.more { color: #6a6c6f; }
.apptext { font: 700 14px "Liberation Sans", sans-serif; fill: #3d5172; text-anchor: middle; }

/* side panel */
.work { flex: 1; min-height: 0; display: flex; }
.side { flex: none; width: 521px; padding-right: 7px; display: flex; flex-direction: column; }
.sidehead { height: 32px; display: flex; align-items: center; padding: 0 1px 2px 5px; color: #5f7088; }
.sidehead span { flex: 1; }
.sidehead button { width: 29px; display: grid; place-items: center; padding-top: 2px; }
.sidetabs { display: flex; height: 20px; margin-bottom: -1px; }
.sidetabs button { padding: 0 8px; line-height: 20px; }
.sidetabs .on { background: #fff; border: 1px solid #a9adb0; border-bottom: 0; padding: 0 7px; border-radius: 2px 2px 0 0; }
.tree { height: 362px; flex: none; display: flex; background: #fff; border: 1px solid #a9adb0; border-radius: 2px; }
.rows { flex: 1; padding: 1px 0 0 24px; }
.rows li { display: flex; height: 22px; align-items: center; }
.rows i, .props i { position: relative; flex: none; width: 25px; height: 22px; }
.rows .v::before, .rows .t::before, .rows .l::before, .props i::before { content: ""; position: absolute; left: 12px; top: 0; height: 100%; border-left: 1px solid #cdd0d2; }
.rows .t::after, .props .t::after { content: ""; position: absolute; left: 12px; top: 11px; width: 13px; border-top: 1px solid #cdd0d2; }
.rows .l::before, .props .l::before { height: 12px; width: 13px; border-bottom: 1px solid #cdd0d2; border-radius: 0 0 0 3px; }
.x::before { content: ""; position: absolute; left: 5px; top: 3px; width: 14px; height: 14px; border: 1px solid #8f9396; border-radius: 50%; background: linear-gradient(#3c4650, #3c4650) center / 6px 2px no-repeat; }
.x.p::before { background: linear-gradient(#3c4650, #3c4650) center / 8px 2px no-repeat, linear-gradient(#3c4650, #3c4650) center / 2px 8px no-repeat; }
.ic { width: 18px; height: 18px; margin: 0 7px 0 5px; }
.sel { flex: 1; height: 22px; display: flex; align-items: center; background: #8ec4fd; }
.dim { color: #4f5254; }
.scroll { width: 14px; padding: 20px 2px 4px; display: flex; flex-direction: column; align-items: center; }
.scroll span { width: 6px; height: 98px; margin: auto 0 2px; background: #aab0b4; }
.props { flex: 1; margin-top: 4px; border: 1px solid #a9adb0; border-radius: 2px; background: #ecedef; }
.props table { width: 100%; border-collapse: collapse; table-layout: fixed; }
.props th { height: 26px; padding: 0 11px; text-align: left; font-weight: 400; background: #abb0b4; border-right: 1px solid #93989c; border-bottom: 1px solid #7c8184; }
.props th:first-child { width: 125px; }
.props td { height: 25px; padding: 0 3px 1px; border-bottom: 1px solid #c9cbcd; white-space: nowrap; }
.props td:first-child:not([colspan]) { display: flex; padding: 0; border-right: 1px solid #c9cbcd; border-bottom: 0; }
.props td > span { flex: 1; height: 25px; line-height: 23px; padding-left: 3px; border-bottom: 1px solid #c9cbcd; }
.props i { height: 25px; }
.props tr:nth-child(even) { background: #fff; }
.props .cat { background: #bbcfe2; color: #62708a; }
.props .cat td { padding: 0 28px 2px; border: 0; }
.foottabs { flex: none; height: 23px; display: flex; background: #fff; padding-top: 1px; }
.foottabs button { padding: 0 7px; }
.foottabs .on { height: 20px; margin: 2px 0 0 1px; background: #abb0b4; border: 1px solid #8c9195; border-bottom: 0; }

/* view toolbar */
.view { flex: 1; min-width: 0; display: flex; flex-direction: column; }
.toolbar { flex: none; height: 36px; display: flex; align-items: center; background: #fff; }
.tool, .play, .drop { display: grid; place-items: center; }
.tool { width: 35px; }
.tool.big { width: 39px; }
.play { width: 37px; }
.drop { width: 12px; }
.bar { width: 1px; height: 29px; margin: 0 2px; background: #d2d4d6; }
.dots { background: none; border-left: 1px dashed #a9acae; }
.solid { height: 36px; margin: 0 8px; background: #9ea2a5; }
.tlabel { padding: 0 17px 0 10px; }
.select, .spin { display: grid; width: 80px; height: 24px; border: 1px solid #a6a9ac; border-radius: 2px; background: #fff; }
.select > *, .spin > * { grid-area: 1 / 1; }
.select > select, .spin > input { width: 100%; min-width: 0; padding: 0 5px; border: 0; background: none; appearance: none; line-height: 22px; height: 22px; }
.select > svg, .spin > svg { place-self: center end; margin-right: 4px; pointer-events: none; }
.spin { width: 50px; }
.spin > input { padding: 0 3px; appearance: textfield; }
.spin > input::-webkit-inner-spin-button { appearance: none; margin: 0; }
.slider { width: 84px; height: 24px; margin: 0 7px; padding: 0 0 6px; appearance: none; background: none; }
.slider::-webkit-slider-runnable-track { height: 4px; border: 1px solid #b0b3b5; background: #f4f4f4; }
.slider::-webkit-slider-thumb { appearance: none; width: 13px; height: 13px; margin-top: -2px; border: 1px solid #a0a3a6; background: #f6f6f6; }
.speed { margin-left: 5px; }

/* 3D scene */
.scene { position: relative; flex: 1; background: linear-gradient(#b9cde5, #d1dce9 48%, #e7e8ec); }
.field { position: absolute; left: 16%; top: 280px; width: 65.8%; }
.axes { position: absolute; left: 84px; bottom: 83px; overflow: visible; font: 700 12px "Liberation Sans", sans-serif; }
.legend { position: absolute; right: 20px; bottom: 26px; width: 84px; font: 12px/16px "Liberation Sans", sans-serif; color: #111; }
.lt { font-size: 15px; text-align: center; padding-right: 34px; margin: 0 0 2px; white-space: nowrap; }
.lb { display: flex; gap: 2px; padding-left: 5px; }
.ramp { width: 15px; height: 276px; margin-top: 11px; background: linear-gradient(#f00, #ff0 25%, #0f0 50%, #0ff 75%, #00f); }
.ticks { display: flex; flex-direction: column; justify-content: space-between; height: 293px; }
.mark { position: absolute; left: 50%; bottom: 5px; margin-left: -3px; font: 700 13px/20px "Liberation Sans", sans-serif; }

.status { flex: none; height: 33px; padding: 0 16px; border: 1px solid #a9abad; background: #ecedef; text-align: right; line-height: 32px; }

/* taskbar */
.taskbar { flex: none; height: 50px; display: flex; background: linear-gradient(90deg, #cfe1ee, #d5e4ea 20%, #d2e4ea 50%, #d4e2e6 68%, #dcdedc 75%, #cfe0e8 82%, #cde0e8); color: #111; }
.start { width: 60px; display: grid; place-items: center; }
.search { width: 360px; display: flex; align-items: center; background: #fff; border: 1px solid #c4c8ca; padding: 0 10px 0 14px; }
.search input { flex: 1; min-width: 0; border: 0; padding: 0 13px; font-size: 19px; line-height: 28px; }
.search input::placeholder { color: #222; opacity: 1; }
.app { width: 62px; display: grid; place-items: center; padding-top: 1px; }
.first { margin-right: 1px; }
.open { background: linear-gradient(#0078d7, #0078d7) center bottom / 52px 3px no-repeat; }
.current { background: #eaf2f6; border-bottom: 3px solid #0078d7; padding-top: 3px; }
.tray { margin-left: auto; display: flex; align-items: center; }
.weather { display: flex; align-items: center; gap: 10px; font-size: 18px; margin-right: 23px; }
.sys { width: 30px; display: grid; place-items: center; }
.ime { width: 30px; font-size: 20px; }
.clock { display: flex; flex-direction: column; align-items: center; width: 94px; font-size: 16px; line-height: 23px; }
.note { width: 48px; display: grid; place-items: center; }
.peek { width: 6px; height: 50px; margin-left: 11px; border-left: 1px solid #a5b6be; }
```
